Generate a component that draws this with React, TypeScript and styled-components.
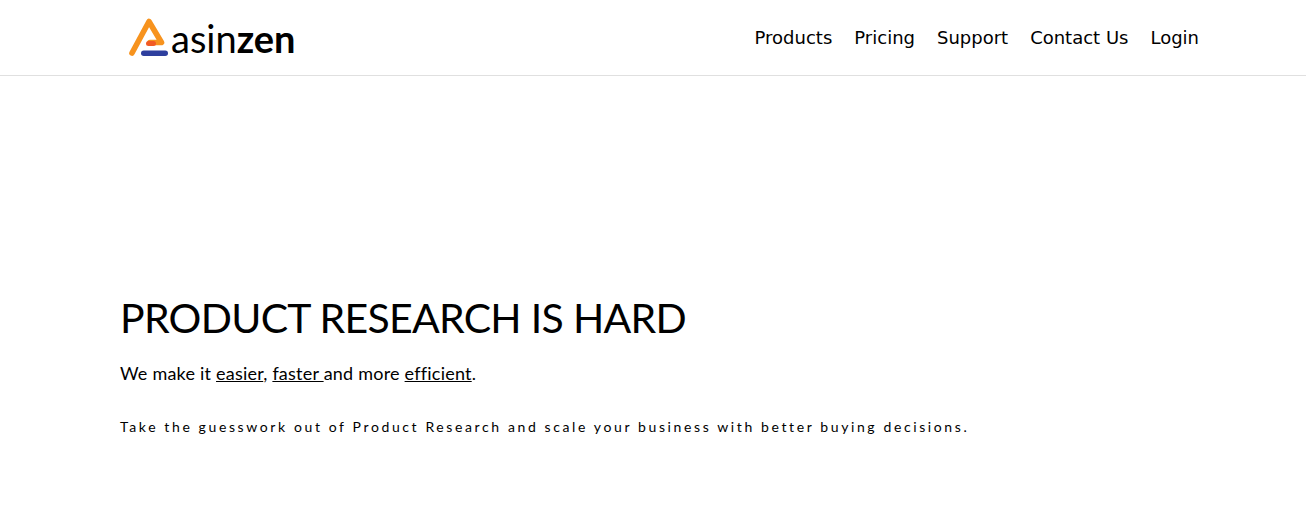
import React from "react";
import styled, { createGlobalStyle } from "styled-components";

const links = ["Products", "Pricing", "Support", "Contact Us", "Login"];

const Global = createGlobalStyle`
  html, body {
    margin: 0;
    background: #fff;
    color: #000;
  }
`;

export default function App() {
  return (
    <>
      <Global />
      <Header>
        <Logo href="#">
          <LogoMark viewBox="128 16 42 42" aria-hidden="true">
            <path
              d="M132 52 L149 20.5 L161.5 41.5 L150 41.5"
              fill="none"
              stroke="#f7931e"
              strokeWidth="5.6"
              strokeLinecap="round"
              strokeLinejoin="round"
            />
            <rect x="146" y="40" width="10" height="5" rx="2.5" fill="#f15a24" />
            <rect x="141" y="49.5" width="27" height="5.5" rx="2.75" fill="#2e3f9e" />
          </LogoMark>
          <LogoText>
            asin<b>zen</b>
          </LogoText>
        </Logo>
        <Nav>
          {links.map(link => (
            <NavLink href="#" key={link}>
              {link}
            </NavLink>
          ))}
        </Nav>
      </Header>
      <Hero>
        <Title>PRODUCT RESEARCH IS HARD</Title>
        <Lead>
          We make it <u>easier</u>, <u>faster </u>and more <u>efficient</u>.
        </Lead>
        <Tagline>
          Take the guesswork out of Product Research and scale your business
          with better buying decisions.
        </Tagline>
      </Hero>
    </>
  );
}

const Header = styled.header`
  box-sizing: border-box;
  height: 76px;
  padding: 0 107px 0 128px;
  display: flex;
  align-items: center;
  justify-content: space-between;
  border-bottom: 1px solid #e0e0e0;
`;

const Logo = styled.a`
  display: flex;
  align-items: flex-end;
  height: 42px;
  color: #000;
  text-decoration: none;
`;

const LogoMark = styled.svg`
  width: 42px;
  height: 42px;
  display: block;
`;

const LogoText = styled.span`
  font-family: "Lato", sans-serif;
  font-size: 38px;
  line-height: 38px;
  margin-left: 1px;
  margin-bottom: 2px;

  b {
    font-weight: 700;
  }
`;

const Nav = styled.nav`
  display: flex;
  gap: 22px;
  margin-top: 1px;
`;

const NavLink = styled.a`
  font-family: "DejaVu Sans", sans-serif;
  font-size: 18px;
  line-height: 24px;
  color: #000;
  text-decoration: none;
`;

const Hero = styled.main`
  padding: 218px 0 0 120px;
  font-family: "Lato", sans-serif;
`;

const Title = styled.h1`
  margin: 0;
  font-size: 41px;
  line-height: 48px;
  font-weight: 400;
  letter-spacing: -0.7px;
`;

const Lead = styled.p`
  margin: 19px 0 0;
  font-size: 18px;
  line-height: 24px;
  letter-spacing: 0.22px;
`;

const Tagline = styled.p`
  margin: 32px 0 0;
  font-size: 14px;
  line-height: 20px;
  letter-spacing: 2.61px;
`;
